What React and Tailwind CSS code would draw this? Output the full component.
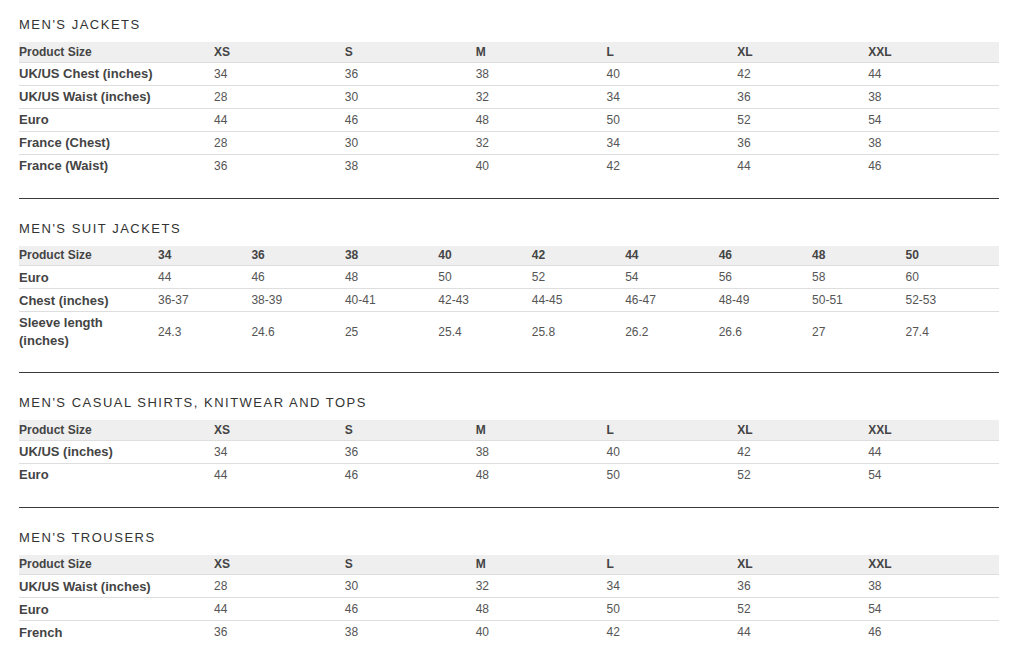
import React from 'react';

const sizes = ['XS', 'S', 'M', 'L', 'XL', 'XXL'];

const charts = [
  {
    title: "MEN'S JACKETS",
    labelWidth: 'w-[195px]',
    head: sizes,
    rows: [
      ['UK/US Chest (inches)', '34', '36', '38', '40', '42', '44'],
      ['UK/US Waist (inches)', '28', '30', '32', '34', '36', '38'],
      ['Euro', '44', '46', '48', '50', '52', '54'],
      ['France (Chest)', '28', '30', '32', '34', '36', '38'],
      ['France (Waist)', '36', '38', '40', '42', '44', '46'],
    ],
  },
  {
    title: "MEN'S SUIT JACKETS",
    labelWidth: 'w-[139px]',
    head: ['34', '36', '38', '40', '42', '44', '46', '48', '50'],
    rows: [
      ['Euro', '44', '46', '48', '50', '52', '54', '56', '58', '60'],
      ['Chest (inches)', '36-37', '38-39', '40-41', '42-43', '44-45', '46-47', '48-49', '50-51', '52-53'],
      ['Sleeve length (inches)', '24.3', '24.6', '25', '25.4', '25.8', '26.2', '26.6', '27', '27.4'],
    ],
  },
  {
    title: "MEN'S CASUAL SHIRTS, KNITWEAR AND TOPS",
    labelWidth: 'w-[195px]',
    head: sizes,
    rows: [
      ['UK/US (inches)', '34', '36', '38', '40', '42', '44'],
      ['Euro', '44', '46', '48', '50', '52', '54'],
    ],
  },
  {
    title: "MEN'S TROUSERS",
    labelWidth: 'w-[195px]',
    head: sizes,
    rows: [
      ['UK/US Waist (inches)', '28', '30', '32', '34', '36', '38'],
      ['Euro', '44', '46', '48', '50', '52', '54'],
      ['French', '36', '38', '40', '42', '44', '46'],
    ],
  },
];

const SizeTable = ({ chart }) => (
  <section>
    <h2 className="text-[13px] leading-[15px] tracking-[1.5px] text-[#333]">{chart.title}</h2>
    <table className="mt-[10px] w-full table-fixed border-collapse text-[12px]">
      <colgroup>
        <col className={chart.labelWidth} />
        {chart.head.map((h) => (
          <col key={h} />
        ))}
      </colgroup>
      <thead>
        <tr className="bg-[#efefef] border-b border-[#dedede]">
          <th className="h-[20px] p-0 text-left font-bold text-[#444]">Product Size</th>
          {chart.head.map((h) => (
            <th key={h} className="p-0 text-left font-bold text-[#444]">{h}</th>
          ))}
        </tr>
      </thead>
      <tbody>
        {chart.rows.map((row, i) => (
          <tr key={i} className={i < chart.rows.length - 1 ? 'border-b border-[#dedede]' : ''}>
            <td className="pt-[2px] pb-px pr-2 text-[13px] leading-[18px] font-bold text-[#444]">{row[0]}</td>
            {row.slice(1).map((v, j) => (
              <td key={j} className="py-[2px] leading-[18px] text-[#555]">{v}</td>
            ))}
          </tr>
        ))}
      </tbody>
    </table>
  </section>
);

export default function App() {
  return (
    <div className="min-h-[655px] bg-white pt-[17px] pl-[19px] font-['Liberation_Sans',Arial,sans-serif]">
      <div className="w-[980px]">
        {charts.map((chart, i) => (
          <div key={chart.title}>
            <SizeTable chart={chart} />
            {i < charts.length - 1 && (
              <div className="mt-[21px] mb-[22px] h-px bg-[#3a3a3a]" />
            )}
          </div>
        ))}
      </div>
    </div>
  );
}
